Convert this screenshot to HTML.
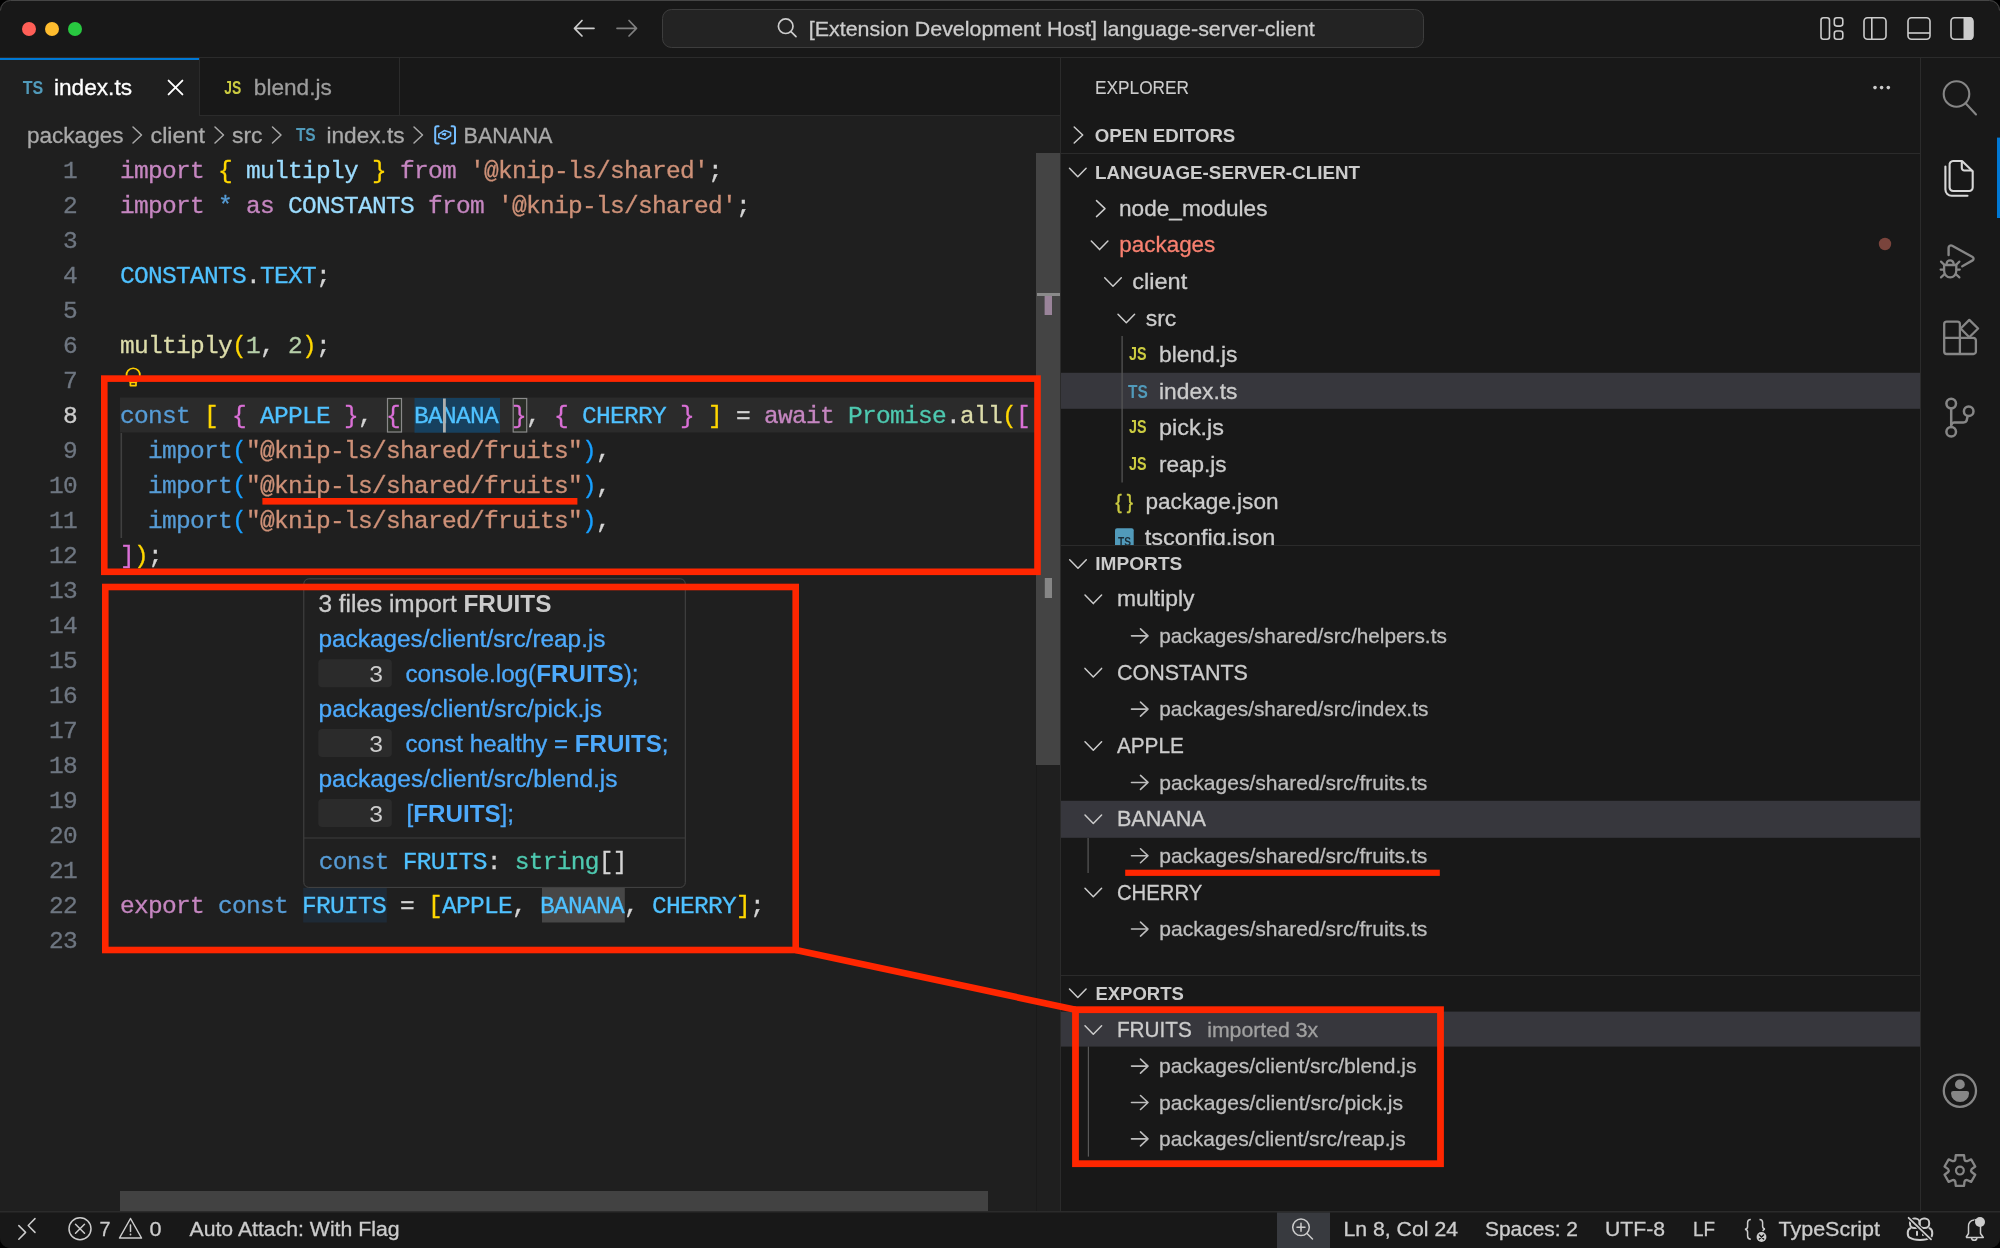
<!DOCTYPE html>
<html><head><meta charset="utf-8"><style>
html,body{margin:0;padding:0;background:#000;width:2000px;height:1248px;overflow:hidden}
svg{display:block;will-change:transform;font-family:"Liberation Sans", sans-serif}
text{white-space:pre}

</style></head><body>
<svg width="2000" height="1248" viewBox="0 0 2000 1248">
<rect x="0" y="0" width="2000" height="1248" fill="#000"/>
<rect x="0" y="0" width="2000" height="1248" rx="10" fill="#181818"/>
<rect x="0" y="115" width="1061" height="1096" fill="#1f1f1f"/>
<path d="M0 57 V10 A10 10 0 0 1 10 0 H1990 A10 10 0 0 1 2000 10 V57 Z" fill="#181818"/>
<path d="M0.5 10.5 A10 10 0 0 1 10.5 0.5 H1989.5 A10 10 0 0 1 1999.5 10.5" stroke="#454545" stroke-width="1" fill="none"/>
<rect x="0" y="57" width="2000" height="1" fill="#2b2b2b"/>
<circle cx="29" cy="29" r="7" fill="#ff5f57"/>
<circle cx="52" cy="29" r="7" fill="#febc2e"/>
<circle cx="75" cy="29" r="7" fill="#28c840"/>
<path d="M574.5 28.3 H594 M582 20.5 L574.5 28.3 L582 36" stroke="#cccccc" stroke-width="1.7" fill="none" stroke-linecap="round" stroke-linejoin="round"/>
<path d="M617 28.3 H636.5 M629 20.5 L636.5 28.3 L629 36" stroke="#7f7f7f" stroke-width="1.7" fill="none" stroke-linecap="round" stroke-linejoin="round"/>
<rect x="662.5" y="9.5" width="761" height="38" rx="9" fill="#232323" stroke="#3d3d3d" stroke-width="1"/>
<circle cx="785.7" cy="26.2" r="7.3" stroke="#cccccc" stroke-width="1.7" fill="none"/>
<path d="M791 31.6 L796 36.6" stroke="#cccccc" stroke-width="1.7" fill="none" stroke-linecap="round" stroke-linejoin="round"/>
<text x="808.8" y="36.4" font-size="21" fill="#cccccc" stroke="#cccccc" stroke-width="0.3" textLength="506" lengthAdjust="spacingAndGlyphs">[Extension Development Host] language-server-client</text>
<rect x="1821" y="17.8" width="8.5" height="21.5" rx="2.5" stroke="#cccccc" stroke-width="1.6" fill="none"/>
<rect x="1834.3" y="17.8" width="8.5" height="8.3" rx="2.5" stroke="#cccccc" stroke-width="1.6" fill="none"/>
<rect x="1834.3" y="31" width="8.5" height="8.3" rx="2.5" stroke="#cccccc" stroke-width="1.6" fill="none"/>
<rect x="1864" y="17.8" width="22" height="21.5" rx="3.5" stroke="#cccccc" stroke-width="1.6" fill="none"/>
<rect x="1871" y="17.8" width="1.6" height="21.5" fill="#cccccc"/>
<rect x="1908" y="17.8" width="22" height="21.5" rx="3.5" stroke="#cccccc" stroke-width="1.6" fill="none"/>
<rect x="1908" y="32.2" width="22" height="1.6" fill="#cccccc"/>
<path d="M1963.5 17 H1969.5 A3.5 3.5 0 0 1 1973 20.5 V36.5 A3.5 3.5 0 0 1 1969.5 40 H1963.5 Z" fill="#cccccc"/>
<rect x="1951" y="17.8" width="22" height="21.5" rx="3.5" stroke="#cccccc" stroke-width="1.6" fill="none"/>
<rect x="0" y="58" width="1061" height="57" fill="#181818"/>
<rect x="199" y="115" width="862" height="1" fill="#2b2b2b"/>
<rect x="0" y="58" width="199" height="58" fill="#1f1f1f"/>
<rect x="0" y="58" width="199" height="2" fill="#0078d4"/>
<rect x="199" y="58" width="1" height="57" fill="#2b2b2b"/>
<rect x="399" y="58" width="1" height="57" fill="#2b2b2b"/>
<text x="22.7" y="94.3" font-size="19" fill="#519aba" font-weight="bold" textLength="20.5" lengthAdjust="spacingAndGlyphs">TS</text>
<text x="54" y="95.2" font-size="22" fill="#ffffff" stroke="#ffffff" stroke-width="0.3" textLength="78" lengthAdjust="spacingAndGlyphs">index.ts</text>
<path d="M168.6 80.6 L182.4 94.4 M182.4 80.6 L168.6 94.4" stroke="#ffffff" stroke-width="1.9" fill="none" stroke-linecap="round" stroke-linejoin="round"/>
<text x="224.3" y="93.6" font-size="18" fill="#cbcb41" font-weight="bold" textLength="17" lengthAdjust="spacingAndGlyphs">JS</text>
<text x="253.8" y="95.2" font-size="22" fill="#9d9d9d" stroke="#9d9d9d" stroke-width="0.3" textLength="78" lengthAdjust="spacingAndGlyphs">blend.js</text>
<text x="27" y="142.8" font-size="21.5" fill="#a9a9a9" stroke="#a9a9a9" stroke-width="0.3" textLength="96.5" lengthAdjust="spacingAndGlyphs">packages</text>
<path d="M133 127 L141.5 135 L133 143" stroke="#a9a9a9" stroke-width="1.5" fill="none" stroke-linecap="round" stroke-linejoin="round"/>
<text x="150.5" y="142.8" font-size="21.5" fill="#a9a9a9" stroke="#a9a9a9" stroke-width="0.3" textLength="54.5" lengthAdjust="spacingAndGlyphs">client</text>
<path d="M215 127 L223.5 135 L215 143" stroke="#a9a9a9" stroke-width="1.5" fill="none" stroke-linecap="round" stroke-linejoin="round"/>
<text x="232" y="142.8" font-size="21.5" fill="#a9a9a9" stroke="#a9a9a9" stroke-width="0.3" textLength="30.5" lengthAdjust="spacingAndGlyphs">src</text>
<path d="M272.5 127 L281.0 135 L272.5 143" stroke="#a9a9a9" stroke-width="1.5" fill="none" stroke-linecap="round" stroke-linejoin="round"/>
<text x="295.9" y="140.6" font-size="19" fill="#519aba" font-weight="bold" textLength="19.8" lengthAdjust="spacingAndGlyphs">TS</text>
<text x="326.5" y="142.8" font-size="21.5" fill="#a9a9a9" stroke="#a9a9a9" stroke-width="0.3" textLength="78" lengthAdjust="spacingAndGlyphs">index.ts</text>
<path d="M414 127 L422.5 135 L414 143" stroke="#a9a9a9" stroke-width="1.5" fill="none" stroke-linecap="round" stroke-linejoin="round"/>
<path d="M438.6 126.2 H437.2 A2 2 0 0 0 435.2 128.2 V141.6 A2 2 0 0 0 437.2 143.6 H438.6 M451.6 126.2 H453 A2 2 0 0 1 455 128.2 V141.6 A2 2 0 0 1 453 143.6 H451.6" stroke="#75beff" stroke-width="2" fill="none" stroke-linecap="round"/>
<path d="M438.8 134.2 L444.3 130.6 L450.6 132.4 V135.8 L445 139.2 L438.8 137.4 Z M441.8 134.4 L445.5 133.6 L444.6 136" stroke="#75beff" stroke-width="1.6" fill="none" stroke-linejoin="round"/>
<text x="463.5" y="142.8" font-size="21.5" fill="#a9a9a9" stroke="#a9a9a9" stroke-width="0.3" textLength="89" lengthAdjust="spacingAndGlyphs">BANANA</text>
<rect x="120" y="397.5" width="916" height="35" fill="#2b2b2b"/>
<rect x="414.5" y="398" width="85.5" height="34.7" fill="#17405e"/>
<rect x="387.5" y="398.5" width="14" height="33.5" fill="#2a2e27" stroke="#8a8a8a" stroke-width="1.2"/>
<rect x="513.2" y="398.5" width="13.5" height="33.5" fill="#2a2e27" stroke="#8a8a8a" stroke-width="1.2"/>
<rect x="303.2" y="887.8" width="83.6" height="34.7" fill="#1e2a36"/>
<rect x="542" y="887.8" width="82.8" height="34.7" fill="#474747"/>
<rect x="120.5" y="433" width="1.6" height="105" fill="#404040"/>
<text x="120" y="177.8" font-family='"Liberation Mono", monospace' font-size="24.5" letter-spacing="-0.700" fill="#c586c0" stroke="#c586c0" stroke-width="0.3" xml:space="preserve">import</text>
<text x="218" y="177.8" font-family='"Liberation Mono", monospace' font-size="24.5" letter-spacing="-0.700" fill="#ffd700" stroke="#ffd700" stroke-width="0.3" xml:space="preserve">{</text>
<text x="246" y="177.8" font-family='"Liberation Mono", monospace' font-size="24.5" letter-spacing="-0.700" fill="#9cdcfe" stroke="#9cdcfe" stroke-width="0.3" xml:space="preserve">multiply</text>
<text x="372" y="177.8" font-family='"Liberation Mono", monospace' font-size="24.5" letter-spacing="-0.700" fill="#ffd700" stroke="#ffd700" stroke-width="0.3" xml:space="preserve">}</text>
<text x="400" y="177.8" font-family='"Liberation Mono", monospace' font-size="24.5" letter-spacing="-0.700" fill="#c586c0" stroke="#c586c0" stroke-width="0.3" xml:space="preserve">from</text>
<text x="470" y="177.8" font-family='"Liberation Mono", monospace' font-size="24.5" letter-spacing="-0.700" fill="#ce9178" stroke="#ce9178" stroke-width="0.3" xml:space="preserve">'@knip-ls/shared'</text>
<text x="708" y="177.8" font-family='"Liberation Mono", monospace' font-size="24.5" letter-spacing="-0.700" fill="#d4d4d4" stroke="#d4d4d4" stroke-width="0.3" xml:space="preserve">;</text>
<text x="120" y="212.8" font-family='"Liberation Mono", monospace' font-size="24.5" letter-spacing="-0.700" fill="#c586c0" stroke="#c586c0" stroke-width="0.3" xml:space="preserve">import</text>
<text x="218" y="212.8" font-family='"Liberation Mono", monospace' font-size="24.5" letter-spacing="-0.700" fill="#569cd6" stroke="#569cd6" stroke-width="0.3" xml:space="preserve">*</text>
<text x="246" y="212.8" font-family='"Liberation Mono", monospace' font-size="24.5" letter-spacing="-0.700" fill="#c586c0" stroke="#c586c0" stroke-width="0.3" xml:space="preserve">as</text>
<text x="288" y="212.8" font-family='"Liberation Mono", monospace' font-size="24.5" letter-spacing="-0.700" fill="#9cdcfe" stroke="#9cdcfe" stroke-width="0.3" xml:space="preserve">CONSTANTS</text>
<text x="428" y="212.8" font-family='"Liberation Mono", monospace' font-size="24.5" letter-spacing="-0.700" fill="#c586c0" stroke="#c586c0" stroke-width="0.3" xml:space="preserve">from</text>
<text x="498" y="212.8" font-family='"Liberation Mono", monospace' font-size="24.5" letter-spacing="-0.700" fill="#ce9178" stroke="#ce9178" stroke-width="0.3" xml:space="preserve">'@knip-ls/shared'</text>
<text x="736" y="212.8" font-family='"Liberation Mono", monospace' font-size="24.5" letter-spacing="-0.700" fill="#d4d4d4" stroke="#d4d4d4" stroke-width="0.3" xml:space="preserve">;</text>
<text x="120" y="282.8" font-family='"Liberation Mono", monospace' font-size="24.5" letter-spacing="-0.700" fill="#4fc1ff" stroke="#4fc1ff" stroke-width="0.3" xml:space="preserve">CONSTANTS</text>
<text x="246" y="282.8" font-family='"Liberation Mono", monospace' font-size="24.5" letter-spacing="-0.700" fill="#d4d4d4" stroke="#d4d4d4" stroke-width="0.3" xml:space="preserve">.</text>
<text x="260" y="282.8" font-family='"Liberation Mono", monospace' font-size="24.5" letter-spacing="-0.700" fill="#4fc1ff" stroke="#4fc1ff" stroke-width="0.3" xml:space="preserve">TEXT</text>
<text x="316" y="282.8" font-family='"Liberation Mono", monospace' font-size="24.5" letter-spacing="-0.700" fill="#d4d4d4" stroke="#d4d4d4" stroke-width="0.3" xml:space="preserve">;</text>
<text x="120" y="352.8" font-family='"Liberation Mono", monospace' font-size="24.5" letter-spacing="-0.700" fill="#dcdcaa" stroke="#dcdcaa" stroke-width="0.3" xml:space="preserve">multiply</text>
<text x="232" y="352.8" font-family='"Liberation Mono", monospace' font-size="24.5" letter-spacing="-0.700" fill="#ffd700" stroke="#ffd700" stroke-width="0.3" xml:space="preserve">(</text>
<text x="246" y="352.8" font-family='"Liberation Mono", monospace' font-size="24.5" letter-spacing="-0.700" fill="#b5cea8" stroke="#b5cea8" stroke-width="0.3" xml:space="preserve">1</text>
<text x="260" y="352.8" font-family='"Liberation Mono", monospace' font-size="24.5" letter-spacing="-0.700" fill="#d4d4d4" stroke="#d4d4d4" stroke-width="0.3" xml:space="preserve">,</text>
<text x="288" y="352.8" font-family='"Liberation Mono", monospace' font-size="24.5" letter-spacing="-0.700" fill="#b5cea8" stroke="#b5cea8" stroke-width="0.3" xml:space="preserve">2</text>
<text x="302" y="352.8" font-family='"Liberation Mono", monospace' font-size="24.5" letter-spacing="-0.700" fill="#ffd700" stroke="#ffd700" stroke-width="0.3" xml:space="preserve">)</text>
<text x="316" y="352.8" font-family='"Liberation Mono", monospace' font-size="24.5" letter-spacing="-0.700" fill="#d4d4d4" stroke="#d4d4d4" stroke-width="0.3" xml:space="preserve">;</text>
<text x="120" y="422.8" font-family='"Liberation Mono", monospace' font-size="24.5" letter-spacing="-0.700" fill="#569cd6" stroke="#569cd6" stroke-width="0.3" xml:space="preserve">const</text>
<text x="204" y="422.8" font-family='"Liberation Mono", monospace' font-size="24.5" letter-spacing="-0.700" fill="#ffd700" stroke="#ffd700" stroke-width="0.3" xml:space="preserve">[</text>
<text x="232" y="422.8" font-family='"Liberation Mono", monospace' font-size="24.5" letter-spacing="-0.700" fill="#da70d6" stroke="#da70d6" stroke-width="0.3" xml:space="preserve">{</text>
<text x="260" y="422.8" font-family='"Liberation Mono", monospace' font-size="24.5" letter-spacing="-0.700" fill="#4fc1ff" stroke="#4fc1ff" stroke-width="0.3" xml:space="preserve">APPLE</text>
<text x="344" y="422.8" font-family='"Liberation Mono", monospace' font-size="24.5" letter-spacing="-0.700" fill="#da70d6" stroke="#da70d6" stroke-width="0.3" xml:space="preserve">}</text>
<text x="358" y="422.8" font-family='"Liberation Mono", monospace' font-size="24.5" letter-spacing="-0.700" fill="#d4d4d4" stroke="#d4d4d4" stroke-width="0.3" xml:space="preserve">,</text>
<text x="386" y="422.8" font-family='"Liberation Mono", monospace' font-size="24.5" letter-spacing="-0.700" fill="#da70d6" stroke="#da70d6" stroke-width="0.3" xml:space="preserve">{</text>
<text x="414" y="422.8" font-family='"Liberation Mono", monospace' font-size="24.5" letter-spacing="-0.700" fill="#4fc1ff" stroke="#4fc1ff" stroke-width="0.3" xml:space="preserve">BANANA</text>
<text x="512" y="422.8" font-family='"Liberation Mono", monospace' font-size="24.5" letter-spacing="-0.700" fill="#da70d6" stroke="#da70d6" stroke-width="0.3" xml:space="preserve">}</text>
<text x="526" y="422.8" font-family='"Liberation Mono", monospace' font-size="24.5" letter-spacing="-0.700" fill="#d4d4d4" stroke="#d4d4d4" stroke-width="0.3" xml:space="preserve">,</text>
<text x="554" y="422.8" font-family='"Liberation Mono", monospace' font-size="24.5" letter-spacing="-0.700" fill="#da70d6" stroke="#da70d6" stroke-width="0.3" xml:space="preserve">{</text>
<text x="582" y="422.8" font-family='"Liberation Mono", monospace' font-size="24.5" letter-spacing="-0.700" fill="#4fc1ff" stroke="#4fc1ff" stroke-width="0.3" xml:space="preserve">CHERRY</text>
<text x="680" y="422.8" font-family='"Liberation Mono", monospace' font-size="24.5" letter-spacing="-0.700" fill="#da70d6" stroke="#da70d6" stroke-width="0.3" xml:space="preserve">}</text>
<text x="708" y="422.8" font-family='"Liberation Mono", monospace' font-size="24.5" letter-spacing="-0.700" fill="#ffd700" stroke="#ffd700" stroke-width="0.3" xml:space="preserve">]</text>
<text x="736" y="422.8" font-family='"Liberation Mono", monospace' font-size="24.5" letter-spacing="-0.700" fill="#d4d4d4" stroke="#d4d4d4" stroke-width="0.3" xml:space="preserve">=</text>
<text x="764" y="422.8" font-family='"Liberation Mono", monospace' font-size="24.5" letter-spacing="-0.700" fill="#c586c0" stroke="#c586c0" stroke-width="0.3" xml:space="preserve">await</text>
<text x="848" y="422.8" font-family='"Liberation Mono", monospace' font-size="24.5" letter-spacing="-0.700" fill="#4ec9b0" stroke="#4ec9b0" stroke-width="0.3" xml:space="preserve">Promise</text>
<text x="946" y="422.8" font-family='"Liberation Mono", monospace' font-size="24.5" letter-spacing="-0.700" fill="#d4d4d4" stroke="#d4d4d4" stroke-width="0.3" xml:space="preserve">.</text>
<text x="960" y="422.8" font-family='"Liberation Mono", monospace' font-size="24.5" letter-spacing="-0.700" fill="#dcdcaa" stroke="#dcdcaa" stroke-width="0.3" xml:space="preserve">all</text>
<text x="1002" y="422.8" font-family='"Liberation Mono", monospace' font-size="24.5" letter-spacing="-0.700" fill="#ffd700" stroke="#ffd700" stroke-width="0.3" xml:space="preserve">(</text>
<text x="1016" y="422.8" font-family='"Liberation Mono", monospace' font-size="24.5" letter-spacing="-0.700" fill="#da70d6" stroke="#da70d6" stroke-width="0.3" xml:space="preserve">[</text>
<text x="148" y="457.8" font-family='"Liberation Mono", monospace' font-size="24.5" letter-spacing="-0.700" fill="#569cd6" stroke="#569cd6" stroke-width="0.3" xml:space="preserve">import</text>
<text x="232" y="457.8" font-family='"Liberation Mono", monospace' font-size="24.5" letter-spacing="-0.700" fill="#179fff" stroke="#179fff" stroke-width="0.3" xml:space="preserve">(</text>
<text x="246" y="457.8" font-family='"Liberation Mono", monospace' font-size="24.5" letter-spacing="-0.700" fill="#ce9178" stroke="#ce9178" stroke-width="0.3" xml:space="preserve">"@knip-ls/shared/fruits"</text>
<text x="582" y="457.8" font-family='"Liberation Mono", monospace' font-size="24.5" letter-spacing="-0.700" fill="#179fff" stroke="#179fff" stroke-width="0.3" xml:space="preserve">)</text>
<text x="596" y="457.8" font-family='"Liberation Mono", monospace' font-size="24.5" letter-spacing="-0.700" fill="#d4d4d4" stroke="#d4d4d4" stroke-width="0.3" xml:space="preserve">,</text>
<text x="148" y="492.8" font-family='"Liberation Mono", monospace' font-size="24.5" letter-spacing="-0.700" fill="#569cd6" stroke="#569cd6" stroke-width="0.3" xml:space="preserve">import</text>
<text x="232" y="492.8" font-family='"Liberation Mono", monospace' font-size="24.5" letter-spacing="-0.700" fill="#179fff" stroke="#179fff" stroke-width="0.3" xml:space="preserve">(</text>
<text x="246" y="492.8" font-family='"Liberation Mono", monospace' font-size="24.5" letter-spacing="-0.700" fill="#ce9178" stroke="#ce9178" stroke-width="0.3" xml:space="preserve">"@knip-ls/shared/fruits"</text>
<text x="582" y="492.8" font-family='"Liberation Mono", monospace' font-size="24.5" letter-spacing="-0.700" fill="#179fff" stroke="#179fff" stroke-width="0.3" xml:space="preserve">)</text>
<text x="596" y="492.8" font-family='"Liberation Mono", monospace' font-size="24.5" letter-spacing="-0.700" fill="#d4d4d4" stroke="#d4d4d4" stroke-width="0.3" xml:space="preserve">,</text>
<text x="148" y="527.8" font-family='"Liberation Mono", monospace' font-size="24.5" letter-spacing="-0.700" fill="#569cd6" stroke="#569cd6" stroke-width="0.3" xml:space="preserve">import</text>
<text x="232" y="527.8" font-family='"Liberation Mono", monospace' font-size="24.5" letter-spacing="-0.700" fill="#179fff" stroke="#179fff" stroke-width="0.3" xml:space="preserve">(</text>
<text x="246" y="527.8" font-family='"Liberation Mono", monospace' font-size="24.5" letter-spacing="-0.700" fill="#ce9178" stroke="#ce9178" stroke-width="0.3" xml:space="preserve">"@knip-ls/shared/fruits"</text>
<text x="582" y="527.8" font-family='"Liberation Mono", monospace' font-size="24.5" letter-spacing="-0.700" fill="#179fff" stroke="#179fff" stroke-width="0.3" xml:space="preserve">)</text>
<text x="596" y="527.8" font-family='"Liberation Mono", monospace' font-size="24.5" letter-spacing="-0.700" fill="#d4d4d4" stroke="#d4d4d4" stroke-width="0.3" xml:space="preserve">,</text>
<text x="120" y="562.8" font-family='"Liberation Mono", monospace' font-size="24.5" letter-spacing="-0.700" fill="#da70d6" stroke="#da70d6" stroke-width="0.3" xml:space="preserve">]</text>
<text x="134" y="562.8" font-family='"Liberation Mono", monospace' font-size="24.5" letter-spacing="-0.700" fill="#ffd700" stroke="#ffd700" stroke-width="0.3" xml:space="preserve">)</text>
<text x="148" y="562.8" font-family='"Liberation Mono", monospace' font-size="24.5" letter-spacing="-0.700" fill="#d4d4d4" stroke="#d4d4d4" stroke-width="0.3" xml:space="preserve">;</text>
<text x="120" y="912.8" font-family='"Liberation Mono", monospace' font-size="24.5" letter-spacing="-0.700" fill="#c586c0" stroke="#c586c0" stroke-width="0.3" xml:space="preserve">export</text>
<text x="218" y="912.8" font-family='"Liberation Mono", monospace' font-size="24.5" letter-spacing="-0.700" fill="#569cd6" stroke="#569cd6" stroke-width="0.3" xml:space="preserve">const</text>
<text x="302" y="912.8" font-family='"Liberation Mono", monospace' font-size="24.5" letter-spacing="-0.700" fill="#4fc1ff" stroke="#4fc1ff" stroke-width="0.3" xml:space="preserve">FRUITS</text>
<text x="400" y="912.8" font-family='"Liberation Mono", monospace' font-size="24.5" letter-spacing="-0.700" fill="#d4d4d4" stroke="#d4d4d4" stroke-width="0.3" xml:space="preserve">=</text>
<text x="428" y="912.8" font-family='"Liberation Mono", monospace' font-size="24.5" letter-spacing="-0.700" fill="#ffd700" stroke="#ffd700" stroke-width="0.3" xml:space="preserve">[</text>
<text x="442" y="912.8" font-family='"Liberation Mono", monospace' font-size="24.5" letter-spacing="-0.700" fill="#4fc1ff" stroke="#4fc1ff" stroke-width="0.3" xml:space="preserve">APPLE</text>
<text x="512" y="912.8" font-family='"Liberation Mono", monospace' font-size="24.5" letter-spacing="-0.700" fill="#d4d4d4" stroke="#d4d4d4" stroke-width="0.3" xml:space="preserve">,</text>
<text x="540" y="912.8" font-family='"Liberation Mono", monospace' font-size="24.5" letter-spacing="-0.700" fill="#4fc1ff" stroke="#4fc1ff" stroke-width="0.3" xml:space="preserve">BANANA</text>
<text x="624" y="912.8" font-family='"Liberation Mono", monospace' font-size="24.5" letter-spacing="-0.700" fill="#d4d4d4" stroke="#d4d4d4" stroke-width="0.3" xml:space="preserve">,</text>
<text x="652" y="912.8" font-family='"Liberation Mono", monospace' font-size="24.5" letter-spacing="-0.700" fill="#4fc1ff" stroke="#4fc1ff" stroke-width="0.3" xml:space="preserve">CHERRY</text>
<text x="736" y="912.8" font-family='"Liberation Mono", monospace' font-size="24.5" letter-spacing="-0.700" fill="#ffd700" stroke="#ffd700" stroke-width="0.3" xml:space="preserve">]</text>
<text x="750" y="912.8" font-family='"Liberation Mono", monospace' font-size="24.5" letter-spacing="-0.700" fill="#d4d4d4" stroke="#d4d4d4" stroke-width="0.3" xml:space="preserve">;</text>
<text x="63" y="177.8" font-family='"Liberation Mono", monospace' font-size="24.5" letter-spacing="-0.700" fill="#6e7681" stroke="#6e7681" stroke-width="0.3">1</text>
<text x="63" y="212.8" font-family='"Liberation Mono", monospace' font-size="24.5" letter-spacing="-0.700" fill="#6e7681" stroke="#6e7681" stroke-width="0.3">2</text>
<text x="63" y="247.8" font-family='"Liberation Mono", monospace' font-size="24.5" letter-spacing="-0.700" fill="#6e7681" stroke="#6e7681" stroke-width="0.3">3</text>
<text x="63" y="282.8" font-family='"Liberation Mono", monospace' font-size="24.5" letter-spacing="-0.700" fill="#6e7681" stroke="#6e7681" stroke-width="0.3">4</text>
<text x="63" y="317.8" font-family='"Liberation Mono", monospace' font-size="24.5" letter-spacing="-0.700" fill="#6e7681" stroke="#6e7681" stroke-width="0.3">5</text>
<text x="63" y="352.8" font-family='"Liberation Mono", monospace' font-size="24.5" letter-spacing="-0.700" fill="#6e7681" stroke="#6e7681" stroke-width="0.3">6</text>
<text x="63" y="387.8" font-family='"Liberation Mono", monospace' font-size="24.5" letter-spacing="-0.700" fill="#6e7681" stroke="#6e7681" stroke-width="0.3">7</text>
<text x="63" y="422.8" font-family='"Liberation Mono", monospace' font-size="24.5" letter-spacing="-0.700" fill="#cccccc" stroke="#cccccc" stroke-width="0.3">8</text>
<text x="63" y="457.8" font-family='"Liberation Mono", monospace' font-size="24.5" letter-spacing="-0.700" fill="#6e7681" stroke="#6e7681" stroke-width="0.3">9</text>
<text x="49" y="492.8" font-family='"Liberation Mono", monospace' font-size="24.5" letter-spacing="-0.700" fill="#6e7681" stroke="#6e7681" stroke-width="0.3">10</text>
<text x="49" y="527.8" font-family='"Liberation Mono", monospace' font-size="24.5" letter-spacing="-0.700" fill="#6e7681" stroke="#6e7681" stroke-width="0.3">11</text>
<text x="49" y="562.8" font-family='"Liberation Mono", monospace' font-size="24.5" letter-spacing="-0.700" fill="#6e7681" stroke="#6e7681" stroke-width="0.3">12</text>
<text x="49" y="597.8" font-family='"Liberation Mono", monospace' font-size="24.5" letter-spacing="-0.700" fill="#6e7681" stroke="#6e7681" stroke-width="0.3">13</text>
<text x="49" y="632.8" font-family='"Liberation Mono", monospace' font-size="24.5" letter-spacing="-0.700" fill="#6e7681" stroke="#6e7681" stroke-width="0.3">14</text>
<text x="49" y="667.8" font-family='"Liberation Mono", monospace' font-size="24.5" letter-spacing="-0.700" fill="#6e7681" stroke="#6e7681" stroke-width="0.3">15</text>
<text x="49" y="702.8" font-family='"Liberation Mono", monospace' font-size="24.5" letter-spacing="-0.700" fill="#6e7681" stroke="#6e7681" stroke-width="0.3">16</text>
<text x="49" y="737.8" font-family='"Liberation Mono", monospace' font-size="24.5" letter-spacing="-0.700" fill="#6e7681" stroke="#6e7681" stroke-width="0.3">17</text>
<text x="49" y="772.8" font-family='"Liberation Mono", monospace' font-size="24.5" letter-spacing="-0.700" fill="#6e7681" stroke="#6e7681" stroke-width="0.3">18</text>
<text x="49" y="807.8" font-family='"Liberation Mono", monospace' font-size="24.5" letter-spacing="-0.700" fill="#6e7681" stroke="#6e7681" stroke-width="0.3">19</text>
<text x="49" y="842.8" font-family='"Liberation Mono", monospace' font-size="24.5" letter-spacing="-0.700" fill="#6e7681" stroke="#6e7681" stroke-width="0.3">20</text>
<text x="49" y="877.8" font-family='"Liberation Mono", monospace' font-size="24.5" letter-spacing="-0.700" fill="#6e7681" stroke="#6e7681" stroke-width="0.3">21</text>
<text x="49" y="912.8" font-family='"Liberation Mono", monospace' font-size="24.5" letter-spacing="-0.700" fill="#6e7681" stroke="#6e7681" stroke-width="0.3">22</text>
<text x="49" y="947.8" font-family='"Liberation Mono", monospace' font-size="24.5" letter-spacing="-0.700" fill="#6e7681" stroke="#6e7681" stroke-width="0.3">23</text>
<rect x="443" y="398.5" width="2.8" height="34" fill="#aeafad"/>
<path d="M129.6 380.8 A6.8 6.8 0 1 1 136.8 380.8 L136.3 382.3 H130.1 Z M130.4 382.3 V385.6 H136 V382.3" stroke="#ffcc00" stroke-width="1.7" fill="none" stroke-linejoin="round"/>
<rect x="262.4" y="498" width="315" height="6.6" fill="#ff2600"/>
<rect x="1036" y="153" width="24" height="612" fill="#444444"/>
<rect x="1036" y="765" width="1" height="446" fill="#1a1a1a"/>
<rect x="1037" y="293" width="23" height="3" fill="#8a8a8a"/>
<rect x="1044.6" y="296" width="7.4" height="19" fill="#9a849a"/>
<rect x="1044.8" y="578" width="7.2" height="20" fill="#868686"/>
<rect x="120" y="1191" width="868" height="20" fill="#424242"/>
<rect x="303.8" y="578.8" width="381.5" height="308.6" rx="5" fill="#202020" stroke="#454545" stroke-width="1"/>
<text x="318.5" y="611.7" font-size="23" textLength="233" lengthAdjust="spacingAndGlyphs"><tspan fill="#cccccc" stroke="#cccccc" stroke-width="0.3">3 files import </tspan><tspan fill="#cccccc" font-weight="bold">FRUITS</tspan></text>
<text x="318.5" y="646.5" font-size="23" fill="#4daafc" stroke="#4daafc" stroke-width="0.3" textLength="287" lengthAdjust="spacingAndGlyphs">packages/client/src/reap.js</text>
<text x="318.5" y="716.6" font-size="23" fill="#4daafc" stroke="#4daafc" stroke-width="0.3" textLength="283.5" lengthAdjust="spacingAndGlyphs">packages/client/src/pick.js</text>
<text x="318.5" y="786.8" font-size="23" fill="#4daafc" stroke="#4daafc" stroke-width="0.3" textLength="299" lengthAdjust="spacingAndGlyphs">packages/client/src/blend.js</text>
<rect x="318.3" y="659.3" width="73.5" height="28" fill="#2b2b2b" rx="4"/>
<text x="383.5" y="681.7" font-family='"Liberation Mono", monospace' font-size="24.5" fill="#cccccc" text-anchor="end">3</text>
<rect x="318.3" y="729" width="73.5" height="28" fill="#2b2b2b" rx="4"/>
<text x="383.5" y="751.7" font-family='"Liberation Mono", monospace' font-size="24.5" fill="#cccccc" text-anchor="end">3</text>
<rect x="318.3" y="799" width="73.5" height="28" fill="#2b2b2b" rx="4"/>
<text x="383.5" y="821.7" font-family='"Liberation Mono", monospace' font-size="24.5" fill="#cccccc" text-anchor="end">3</text>
<text x="405.5" y="681.7" font-size="23" textLength="233" lengthAdjust="spacingAndGlyphs"><tspan fill="#4daafc" stroke="#4daafc" stroke-width="0.3">console.log(</tspan><tspan fill="#4daafc" font-weight="bold">FRUITS</tspan><tspan fill="#4daafc" stroke="#4daafc" stroke-width="0.3">);</tspan></text>
<text x="405.5" y="751.7" font-size="23" textLength="263" lengthAdjust="spacingAndGlyphs"><tspan fill="#4daafc" stroke="#4daafc" stroke-width="0.3">const healthy = </tspan><tspan fill="#4daafc" font-weight="bold">FRUITS</tspan><tspan fill="#4daafc" stroke="#4daafc" stroke-width="0.3">;</tspan></text>
<text x="406.5" y="821.7" font-size="23" textLength="107.5" lengthAdjust="spacingAndGlyphs"><tspan fill="#4daafc" stroke="#4daafc" stroke-width="0.3">[</tspan><tspan fill="#4daafc" font-weight="bold">FRUITS</tspan><tspan fill="#4daafc" stroke="#4daafc" stroke-width="0.3">];</tspan></text>
<rect x="304" y="837.5" width="381" height="1" fill="#3d3d3d"/>
<text x="318.8" y="869.3" font-family='"Liberation Mono", monospace' font-size="24.5" letter-spacing="-0.700" fill="#569cd6" stroke="#569cd6" stroke-width="0.3" xml:space="preserve">const</text>
<text x="402.8" y="869.3" font-family='"Liberation Mono", monospace' font-size="24.5" letter-spacing="-0.700" fill="#4fc1ff" stroke="#4fc1ff" stroke-width="0.3" xml:space="preserve">FRUITS</text>
<text x="486.8" y="869.3" font-family='"Liberation Mono", monospace' font-size="24.5" letter-spacing="-0.700" fill="#d4d4d4" stroke="#d4d4d4" stroke-width="0.3" xml:space="preserve">:</text>
<text x="514.8" y="869.3" font-family='"Liberation Mono", monospace' font-size="24.5" letter-spacing="-0.700" fill="#4ec9b0" stroke="#4ec9b0" stroke-width="0.3" xml:space="preserve">string</text>
<text x="598.8" y="869.3" font-family='"Liberation Mono", monospace' font-size="24.5" letter-spacing="-0.700" fill="#d4d4d4" stroke="#d4d4d4" stroke-width="0.3" xml:space="preserve">[]</text>
<rect x="1061" y="58" width="859" height="1153" fill="#181818"/>
<rect x="1060" y="58" width="1" height="1153" fill="#2b2b2b"/>
<text x="1095" y="94.2" font-size="18" fill="#cccccc" stroke="#cccccc" stroke-width="0.1" textLength="94" lengthAdjust="spacingAndGlyphs">EXPLORER</text>
<circle cx="1875.0" cy="87.6" r="1.8" fill="#cccccc"/>
<circle cx="1881.6" cy="87.6" r="1.8" fill="#cccccc"/>
<circle cx="1888.3" cy="87.6" r="1.8" fill="#cccccc"/>
<path d="M1074.2 127 L1082.7 135 L1074.2 143" stroke="#cccccc" stroke-width="1.5" fill="none" stroke-linecap="round" stroke-linejoin="round"/>
<text x="1094.8" y="141.7" font-size="18.5" fill="#cccccc" font-weight="bold" textLength="140.5" lengthAdjust="spacingAndGlyphs">OPEN EDITORS</text>
<rect x="1061" y="153" width="859" height="1" fill="#2b2b2b"/>
<path d="M1069.5 168.2 L1077.8 176.7 L1086.1 168.2" stroke="#cccccc" stroke-width="1.5" fill="none" stroke-linecap="round" stroke-linejoin="round"/>
<text x="1095" y="179.2" font-size="18.5" fill="#cccccc" font-weight="bold" textLength="265" lengthAdjust="spacingAndGlyphs">LANGUAGE-SERVER-CLIENT</text>
<rect x="1061" y="372.8" width="859" height="36" fill="#37373d"/>
<path d="M1096.5 200.60000000000002 L1105.0 208.60000000000002 L1096.5 216.60000000000002" stroke="#cccccc" stroke-width="1.5" fill="none" stroke-linecap="round" stroke-linejoin="round"/>
<text x="1119" y="215.8" font-size="22" fill="#cccccc" stroke="#cccccc" stroke-width="0.3" textLength="148.5" lengthAdjust="spacingAndGlyphs">node_modules</text>
<path d="M1091.3 241.1 L1099.6 249.6 L1107.8999999999999 241.1" stroke="#cccccc" stroke-width="1.5" fill="none" stroke-linecap="round" stroke-linejoin="round"/>
<text x="1119.3" y="252.4" font-size="22" fill="#f88070" stroke="#f88070" stroke-width="0.3" textLength="96" lengthAdjust="spacingAndGlyphs">packages</text>
<circle cx="1885" cy="244" r="6.2" fill="#7a443c"/>
<path d="M1104.7 277.7 L1113.0 286.2 L1121.3 277.7" stroke="#cccccc" stroke-width="1.5" fill="none" stroke-linecap="round" stroke-linejoin="round"/>
<text x="1132.2" y="289.0" font-size="22" fill="#cccccc" stroke="#cccccc" stroke-width="0.3" textLength="55" lengthAdjust="spacingAndGlyphs">client</text>
<path d="M1118 314.3 L1126.3 322.8 L1134.6 314.3" stroke="#cccccc" stroke-width="1.5" fill="none" stroke-linecap="round" stroke-linejoin="round"/>
<text x="1145.7" y="325.6" font-size="22" fill="#cccccc" stroke="#cccccc" stroke-width="0.3" textLength="30.5" lengthAdjust="spacingAndGlyphs">src</text>
<rect x="1121.5" y="336" width="1.2" height="146.5" fill="#585858"/>
<text x="1129" y="359.90000000000003" font-size="17.5" fill="#cbcb41" font-weight="bold" textLength="17.5" lengthAdjust="spacingAndGlyphs">JS</text>
<text x="1159" y="362.20000000000005" font-size="22" fill="#cccccc" stroke="#cccccc" stroke-width="0.3" textLength="78.5" lengthAdjust="spacingAndGlyphs">blend.js</text>
<text x="1128" y="397.6" font-size="17.5" fill="#519aba" font-weight="bold" textLength="19.8" lengthAdjust="spacingAndGlyphs">TS</text>
<text x="1159" y="398.8" font-size="22" fill="#cccccc" stroke="#cccccc" stroke-width="0.3" textLength="78.5" lengthAdjust="spacingAndGlyphs">index.ts</text>
<text x="1129" y="433.1" font-size="17.5" fill="#cbcb41" font-weight="bold" textLength="17.5" lengthAdjust="spacingAndGlyphs">JS</text>
<text x="1159" y="435.40000000000003" font-size="22" fill="#cccccc" stroke="#cccccc" stroke-width="0.3" textLength="65" lengthAdjust="spacingAndGlyphs">pick.js</text>
<text x="1129" y="469.7" font-size="17.5" fill="#cbcb41" font-weight="bold" textLength="17.5" lengthAdjust="spacingAndGlyphs">JS</text>
<text x="1159" y="472.0" font-size="22" fill="#cccccc" stroke="#cccccc" stroke-width="0.3" textLength="67.5" lengthAdjust="spacingAndGlyphs">reap.js</text>
<text x="1115.5" y="509.1" font-size="21" fill="#cbcb41" stroke="#cbcb41" stroke-width="0.5" textLength="17.5" lengthAdjust="spacingAndGlyphs">{ }</text>
<text x="1145.5" y="508.6" font-size="22" fill="#cccccc" stroke="#cccccc" stroke-width="0.3" textLength="133" lengthAdjust="spacingAndGlyphs">package.json</text>
<clipPath id="cl1"><rect x="1061" y="520" width="859" height="25"/></clipPath>
<g clip-path="url(#cl1)">
<rect x="1115" y="528.2" width="18.7" height="20" fill="#519aba" rx="2"/>
<text x="1118" y="546" font-size="12" fill="#1b2d38" font-weight="bold" textLength="13" lengthAdjust="spacingAndGlyphs">TS</text>
<text x="1144.8" y="545.2" font-size="22" fill="#cccccc" stroke="#cccccc" stroke-width="0.3" textLength="130.5" lengthAdjust="spacingAndGlyphs">tsconfig.json</text>
</g>
<rect x="1061" y="545" width="859" height="1" fill="#2b2b2b"/>
<path d="M1069.7 559.7 L1078.0 568.2 L1086.3 559.7" stroke="#cccccc" stroke-width="1.5" fill="none" stroke-linecap="round" stroke-linejoin="round"/>
<text x="1095.3" y="570.2" font-size="18.5" fill="#cccccc" font-weight="bold" textLength="87" lengthAdjust="spacingAndGlyphs">IMPORTS</text>
<rect x="1061" y="800.8" width="859" height="37" fill="#37373d"/>
<path d="M1085 595.1 L1093.3 603.6 L1101.6 595.1" stroke="#cccccc" stroke-width="1.5" fill="none" stroke-linecap="round" stroke-linejoin="round"/>
<text x="1116.9" y="606.4" font-size="22" fill="#cccccc" stroke="#cccccc" stroke-width="0.3" textLength="77.6" lengthAdjust="spacingAndGlyphs">multiply</text>
<path d="M1131.5 635.8499999999999 H1148.0 M1140.5 628.8499999999999 L1148.0 635.8499999999999 L1140.5 642.8499999999999" stroke="#bdbdbd" stroke-width="1.6" fill="none" stroke-linecap="round" stroke-linejoin="round"/>
<text x="1159.3" y="643.05" font-size="21" fill="#bdbdbd" stroke="#bdbdbd" stroke-width="0.3" textLength="287.5" lengthAdjust="spacingAndGlyphs">packages/shared/src/helpers.ts</text>
<path d="M1085 668.4 L1093.3 676.9 L1101.6 668.4" stroke="#cccccc" stroke-width="1.5" fill="none" stroke-linecap="round" stroke-linejoin="round"/>
<text x="1116.9" y="679.6999999999999" font-size="22" fill="#cccccc" stroke="#cccccc" stroke-width="0.3" textLength="131" lengthAdjust="spacingAndGlyphs">CONSTANTS</text>
<path d="M1131.5 709.1499999999999 H1148.0 M1140.5 702.1499999999999 L1148.0 709.1499999999999 L1140.5 716.1499999999999" stroke="#bdbdbd" stroke-width="1.6" fill="none" stroke-linecap="round" stroke-linejoin="round"/>
<text x="1159.3" y="716.3499999999999" font-size="21" fill="#bdbdbd" stroke="#bdbdbd" stroke-width="0.3" textLength="269" lengthAdjust="spacingAndGlyphs">packages/shared/src/index.ts</text>
<path d="M1085 741.7 L1093.3 750.2 L1101.6 741.7" stroke="#cccccc" stroke-width="1.5" fill="none" stroke-linecap="round" stroke-linejoin="round"/>
<text x="1116.9" y="753.0" font-size="22" fill="#cccccc" stroke="#cccccc" stroke-width="0.3" textLength="67" lengthAdjust="spacingAndGlyphs">APPLE</text>
<path d="M1131.5 782.4499999999999 H1148.0 M1140.5 775.4499999999999 L1148.0 782.4499999999999 L1140.5 789.4499999999999" stroke="#bdbdbd" stroke-width="1.6" fill="none" stroke-linecap="round" stroke-linejoin="round"/>
<text x="1159.3" y="789.65" font-size="21" fill="#bdbdbd" stroke="#bdbdbd" stroke-width="0.3" textLength="268" lengthAdjust="spacingAndGlyphs">packages/shared/src/fruits.ts</text>
<path d="M1085 815.0 L1093.3 823.5 L1101.6 815.0" stroke="#cccccc" stroke-width="1.5" fill="none" stroke-linecap="round" stroke-linejoin="round"/>
<text x="1116.9" y="826.3" font-size="22" fill="#cccccc" stroke="#cccccc" stroke-width="0.3" textLength="89" lengthAdjust="spacingAndGlyphs">BANANA</text>
<path d="M1131.5 855.7499999999999 H1148.0 M1140.5 848.7499999999999 L1148.0 855.7499999999999 L1140.5 862.7499999999999" stroke="#bdbdbd" stroke-width="1.6" fill="none" stroke-linecap="round" stroke-linejoin="round"/>
<text x="1159.3" y="862.9499999999999" font-size="21" fill="#bdbdbd" stroke="#bdbdbd" stroke-width="0.3" textLength="268" lengthAdjust="spacingAndGlyphs">packages/shared/src/fruits.ts</text>
<path d="M1085 888.3 L1093.3 896.8 L1101.6 888.3" stroke="#cccccc" stroke-width="1.5" fill="none" stroke-linecap="round" stroke-linejoin="round"/>
<text x="1116.9" y="899.5999999999999" font-size="22" fill="#cccccc" stroke="#cccccc" stroke-width="0.3" textLength="85.5" lengthAdjust="spacingAndGlyphs">CHERRY</text>
<path d="M1131.5 929.0499999999998 H1148.0 M1140.5 922.0499999999998 L1148.0 929.0499999999998 L1140.5 936.0499999999998" stroke="#bdbdbd" stroke-width="1.6" fill="none" stroke-linecap="round" stroke-linejoin="round"/>
<text x="1159.3" y="936.2499999999999" font-size="21" fill="#bdbdbd" stroke="#bdbdbd" stroke-width="0.3" textLength="268" lengthAdjust="spacingAndGlyphs">packages/shared/src/fruits.ts</text>
<rect x="1087.5" y="838" width="1.2" height="35" fill="#585858"/>
<rect x="1125.2" y="869.7" width="314.6" height="6.2" fill="#ff2600"/>
<rect x="1061" y="975" width="859" height="1" fill="#2b2b2b"/>
<path d="M1069.5 989.0 L1077.8 997.5 L1086.1 989.0" stroke="#cccccc" stroke-width="1.5" fill="none" stroke-linecap="round" stroke-linejoin="round"/>
<text x="1095.4" y="1000" font-size="18.5" fill="#cccccc" font-weight="bold" textLength="88.5" lengthAdjust="spacingAndGlyphs">EXPORTS</text>
<rect x="1061" y="1011.6" width="859" height="35" fill="#37373d"/>
<path d="M1085 1025.7 L1093.3 1034.2 L1101.6 1025.7" stroke="#cccccc" stroke-width="1.5" fill="none" stroke-linecap="round" stroke-linejoin="round"/>
<text x="1116.9" y="1037" font-size="22" fill="#cccccc" stroke="#cccccc" stroke-width="0.3" textLength="75" lengthAdjust="spacingAndGlyphs">FRUITS</text>
<text x="1207.2" y="1037" font-size="21" fill="#a0a0a0" stroke="#a0a0a0" stroke-width="0.3" textLength="111" lengthAdjust="spacingAndGlyphs">imported 3x</text>
<path d="M1131.5 1066.1 H1148.0 M1140.5 1059.1 L1148.0 1066.1 L1140.5 1073.1" stroke="#bdbdbd" stroke-width="1.6" fill="none" stroke-linecap="round" stroke-linejoin="round"/>
<text x="1159.1" y="1073.3" font-size="21" fill="#bdbdbd" stroke="#bdbdbd" stroke-width="0.3" textLength="257.5" lengthAdjust="spacingAndGlyphs">packages/client/src/blend.js</text>
<path d="M1131.5 1102.5 H1148.0 M1140.5 1095.5 L1148.0 1102.5 L1140.5 1109.5" stroke="#bdbdbd" stroke-width="1.6" fill="none" stroke-linecap="round" stroke-linejoin="round"/>
<text x="1159.1" y="1109.7" font-size="21" fill="#bdbdbd" stroke="#bdbdbd" stroke-width="0.3" textLength="244" lengthAdjust="spacingAndGlyphs">packages/client/src/pick.js</text>
<path d="M1131.5 1138.8999999999999 H1148.0 M1140.5 1131.8999999999999 L1148.0 1138.8999999999999 L1140.5 1145.8999999999999" stroke="#bdbdbd" stroke-width="1.6" fill="none" stroke-linecap="round" stroke-linejoin="round"/>
<text x="1159.1" y="1146.1" font-size="21" fill="#bdbdbd" stroke="#bdbdbd" stroke-width="0.3" textLength="246.5" lengthAdjust="spacingAndGlyphs">packages/client/src/reap.js</text>
<rect x="1087.8" y="1046.6" width="1.2" height="110" fill="#585858"/>
<rect x="1920" y="58" width="80" height="1153" fill="#181818"/>
<rect x="1920" y="58" width="1" height="1153" fill="#2b2b2b"/>
<circle cx="1956.5" cy="94" r="12.8" stroke="#868686" stroke-width="2.1" fill="none"/>
<path d="M1965.6 103.2 L1976 114.5" stroke="#868686" stroke-width="2.1" fill="none" stroke-linecap="round" stroke-linejoin="round"/>
<path d="M1949.6 165 V187.5 A3.5 3.5 0 0 0 1953.1 191 H1969.2 A3.5 3.5 0 0 0 1972.7 187.5 V171.3 L1962 161 H1953.1 A3.5 3.5 0 0 0 1949.6 165 Z" stroke="#d7d7d7" stroke-width="2.1" fill="none" stroke-linejoin="round"/>
<path d="M1961.8 161.5 V168 A2.5 2.5 0 0 0 1964.3 170.5 H1972.2" stroke="#d7d7d7" stroke-width="2.1" fill="none" stroke-linejoin="round"/>
<path d="M1945.4 166.5 V189.5 A6.3 6.3 0 0 0 1951.7 195.8 H1967.5" stroke="#d7d7d7" stroke-width="2.1" fill="none" stroke-linecap="round"/>
<rect x="1997" y="137.6" width="3" height="80.4" fill="#0078d4"/>
<path d="M1948.6 255 V247.8 A2.4 2.4 0 0 1 1952.2 245.7 L1972.6 257 A2 2 0 0 1 1972.6 260.4 L1962.3 266.3" stroke="#868686" stroke-width="2.4" fill="none" stroke-linecap="round" stroke-linejoin="round"/>
<path d="M1946.6 263.8 A3.5 3.5 0 0 1 1953.6 263.8" stroke="#868686" stroke-width="2.3" fill="none" stroke-linecap="round" stroke-linejoin="round"/>
<path d="M1944.1 265 H1956.3 V270.8 A6.1 6.6 0 0 1 1944.1 270.8 Z" stroke="#868686" stroke-width="2.3" fill="none" stroke-linecap="round" stroke-linejoin="round"/>
<path d="M1941 261.6 L1944.1 264.6 M1959.4 261.6 L1956.3 264.6 M1940.6 269.6 H1944 M1956.4 269.6 H1959.8 M1941 277.4 L1944.3 274.4 M1959.4 277.4 L1956.1 274.4" stroke="#868686" stroke-width="2.2" fill="none" stroke-linecap="round" stroke-linejoin="round"/>
<path d="M1944.2 324.1 A2.5 2.5 0 0 1 1946.7 321.6 H1957.4 A2.5 2.5 0 0 1 1959.9 324.1 V354 M1944.2 324.1 V351.5 A2.5 2.5 0 0 0 1946.7 354 H1973.4 A2.5 2.5 0 0 0 1975.9 351.5 V340.4 A2.5 2.5 0 0 0 1973.4 337.9 H1944.2" stroke="#868686" stroke-width="2.3" fill="none" stroke-linecap="round" stroke-linejoin="round"/>
<path d="M1969.3 319.9 L1978.1 328.5 L1969.3 337.2 L1960.7 328.5 Z" stroke="#868686" stroke-width="2.3" fill="none" stroke-linecap="round" stroke-linejoin="round"/>
<circle cx="1951.2" cy="403.6" r="4.8" stroke="#868686" stroke-width="2.5" fill="none"/>
<circle cx="1951.2" cy="431.8" r="4.8" stroke="#868686" stroke-width="2.5" fill="none"/>
<circle cx="1968.7" cy="411.3" r="4.8" stroke="#868686" stroke-width="2.5" fill="none"/>
<path d="M1951.2 408.4 V427 M1951.6 424.5 A3 3 0 0 1 1954 422.6 H1963.5 A3.5 3.5 0 0 0 1966.6 420.6 L1967.6 416.2" stroke="#868686" stroke-width="2.5" fill="none" stroke-linecap="round" stroke-linejoin="round"/>
<circle cx="1959.9" cy="1090.8" r="16.1" stroke="#868686" stroke-width="2.3" fill="none"/>
<circle cx="1959.9" cy="1084.4" r="4.9" fill="#868686"/>
<path d="M1951 1093.3 A2.3 2.3 0 0 1 1953.3 1091 H1966.8 A2.3 2.3 0 0 1 1969.1 1093.3 A9.05 8.6 0 0 1 1951 1093.3 Z" fill="#868686"/>
<path d="M1955.78 1155.24 L1964.02 1155.24 L1964.51 1159.74 Q1965.20 1161.42 1967.00 1161.18 L1971.14 1159.36 L1975.26 1166.48 L1971.61 1169.16 Q1970.50 1170.60 1971.61 1172.04 L1975.26 1174.72 L1971.14 1181.84 L1967.00 1180.02 Q1965.20 1179.78 1964.51 1181.46 L1964.02 1185.96 L1955.78 1185.96 L1955.29 1181.46 Q1954.60 1179.78 1952.80 1180.02 L1948.66 1181.84 L1944.54 1174.72 L1948.19 1172.04 Q1949.30 1170.60 1948.19 1169.16 L1944.54 1166.48 L1948.66 1159.36 L1952.80 1161.18 Q1954.60 1161.42 1955.29 1159.74 Z" stroke="#868686" stroke-width="2.3" fill="none" stroke-linejoin="round"/>
<circle cx="1959.9" cy="1170.6" r="3.9" stroke="#868686" stroke-width="2.2" fill="none"/>
<path d="M0 1211 H2000 V1238 A10 10 0 0 1 1990 1248 H10 A10 10 0 0 1 0 1238 Z" fill="#181818"/>
<rect x="0" y="1211" width="2000" height="1.5" fill="#2b2b2b"/>
<path d="M18.8 1225.6 L25.6 1232.4 L18.8 1239.3 M35 1218.6 L28.2 1225.5 L35 1232.4" stroke="#cccccc" stroke-width="1.5" fill="none" stroke-linecap="round" stroke-linejoin="round"/>
<circle cx="80" cy="1228.8" r="11" stroke="#cccccc" stroke-width="1.5" fill="none"/>
<path d="M75.5 1224.3 L84.5 1233.3 M84.5 1224.3 L75.5 1233.3" stroke="#cccccc" stroke-width="1.5" fill="none" stroke-linecap="round" stroke-linejoin="round"/>
<text x="99.5" y="1236.1" font-size="20" fill="#cccccc" stroke="#cccccc" stroke-width="0.3" textLength="11" lengthAdjust="spacingAndGlyphs">7</text>
<path d="M130.5 1218.5 L141.5 1238 H119.5 Z" stroke="#cccccc" stroke-width="1.5" fill="none" stroke-linecap="round" stroke-linejoin="round"/>
<path d="M130.5 1225 V1231.5" stroke="#cccccc" stroke-width="1.5" fill="none" stroke-linecap="round" stroke-linejoin="round"/>
<circle cx="130.5" cy="1234.5" r="0.9" fill="#cccccc"/>
<text x="149.5" y="1236.1" font-size="20" fill="#cccccc" stroke="#cccccc" stroke-width="0.3" textLength="12" lengthAdjust="spacingAndGlyphs">0</text>
<text x="189.5" y="1236.1" font-size="20" fill="#cccccc" stroke="#cccccc" stroke-width="0.3" textLength="210" lengthAdjust="spacingAndGlyphs">Auto Attach: With Flag</text>
<rect x="1277" y="1212.5" width="53" height="35.5" fill="#383a3f"/>
<circle cx="1301" cy="1227.3" r="8.3" stroke="#cccccc" stroke-width="1.5" fill="none"/>
<path d="M1307 1233.5 L1312.5 1239 M1297 1227.3 H1305 M1301 1223.3 V1231.3" stroke="#cccccc" stroke-width="1.5" fill="none" stroke-linecap="round" stroke-linejoin="round"/>
<text x="1343.5" y="1236.4" font-size="20" fill="#cccccc" stroke="#cccccc" stroke-width="0.3" textLength="114.5" lengthAdjust="spacingAndGlyphs">Ln 8, Col 24</text>
<text x="1485" y="1236.4" font-size="20" fill="#cccccc" stroke="#cccccc" stroke-width="0.3" textLength="93" lengthAdjust="spacingAndGlyphs">Spaces: 2</text>
<text x="1605" y="1236.4" font-size="20" fill="#cccccc" stroke="#cccccc" stroke-width="0.3" textLength="60" lengthAdjust="spacingAndGlyphs">UTF-8</text>
<text x="1693" y="1236.4" font-size="20" fill="#cccccc" stroke="#cccccc" stroke-width="0.3" textLength="22" lengthAdjust="spacingAndGlyphs">LF</text>
<path d="M1750.8 1219.4 Q1747.6 1219.4 1747.6 1222.6 V1226.4 Q1747.6 1228.9 1745 1229.3 Q1747.6 1229.7 1747.6 1232.2 V1236 Q1747.6 1239.2 1750.8 1239.2 M1759.5 1219.4 Q1762.6 1219.4 1762.6 1222.6 V1226.2 Q1762.6 1228.5 1764.9 1229 Q1762.8 1229.6 1762.8 1231.5" stroke="#cccccc" stroke-width="1.5" fill="none"/>
<circle cx="1761.5" cy="1237" r="6" fill="#181818"/>
<circle cx="1761.5" cy="1237" r="4.9" fill="#cccccc"/>
<path d="M1759.4 1234.9 L1763.6 1239.1 M1763.6 1234.9 L1759.4 1239.1" stroke="#181818" stroke-width="1.4" fill="none" stroke-linecap="round" stroke-linejoin="round"/>
<text x="1778.5" y="1236.4" font-size="20" fill="#cccccc" stroke="#cccccc" stroke-width="0.3" textLength="101.5" lengthAdjust="spacingAndGlyphs">TypeScript</text>
<rect x="1910" y="1218.5" width="9.6" height="9.6" rx="4.3" stroke="#cccccc" stroke-width="2" fill="none"/>
<rect x="1919.6" y="1218.5" width="9.6" height="9.6" rx="4.3" stroke="#cccccc" stroke-width="2" fill="none"/>
<path d="M1910.5 1228.3 C1906.8 1229.5 1907 1236.5 1910 1237.8 C1914 1240.6 1926 1240.6 1930 1237.8 C1933 1236.5 1933.2 1229.5 1929.5 1228.3" stroke="#cccccc" stroke-width="2" fill="none" stroke-linecap="round" stroke-linejoin="round"/>
<path d="M1917 1231.8 V1235 M1923 1231.8 V1235" stroke="#cccccc" stroke-width="2" fill="none" stroke-linecap="round" stroke-linejoin="round"/>
<path d="M1908.6 1217.8 L1931 1239.4" stroke="#181818" stroke-width="4" fill="none" stroke-linecap="round" stroke-linejoin="round"/>
<path d="M1908.6 1217.8 L1931 1239.4" stroke="#cccccc" stroke-width="1.8" fill="none" stroke-linecap="round" stroke-linejoin="round"/>
<path d="M1966 1237.5 H1983.3 L1980.5 1233.5 V1227 A7 7 0 0 0 1974.5 1219.6 M1966 1237.5 L1968.5 1233.5 V1227 A6 6 0 0 1 1974 1220" stroke="#cccccc" stroke-width="1.5" fill="none" stroke-linejoin="round"/>
<path d="M1971.5 1238 A2.8 2.8 0 0 0 1977 1238" stroke="#cccccc" stroke-width="1.5" fill="none"/>
<circle cx="1980" cy="1222" r="5" fill="#cccccc"/>
<rect x="104.3" y="378.6" width="933.2" height="193.2" fill="none" stroke="#ff2600" stroke-width="6.6"/>
<rect x="105.3" y="587" width="690.4" height="363" fill="none" stroke="#ff2600" stroke-width="6.6"/>
<rect x="1075.5" y="1009.7" width="365" height="154" fill="none" stroke="#ff2600" stroke-width="6.8"/>
<path d="M795.7 950 L1075.5 1009.7" stroke="#ff2600" stroke-width="6.6" fill="none"/>
</svg></body></html>
